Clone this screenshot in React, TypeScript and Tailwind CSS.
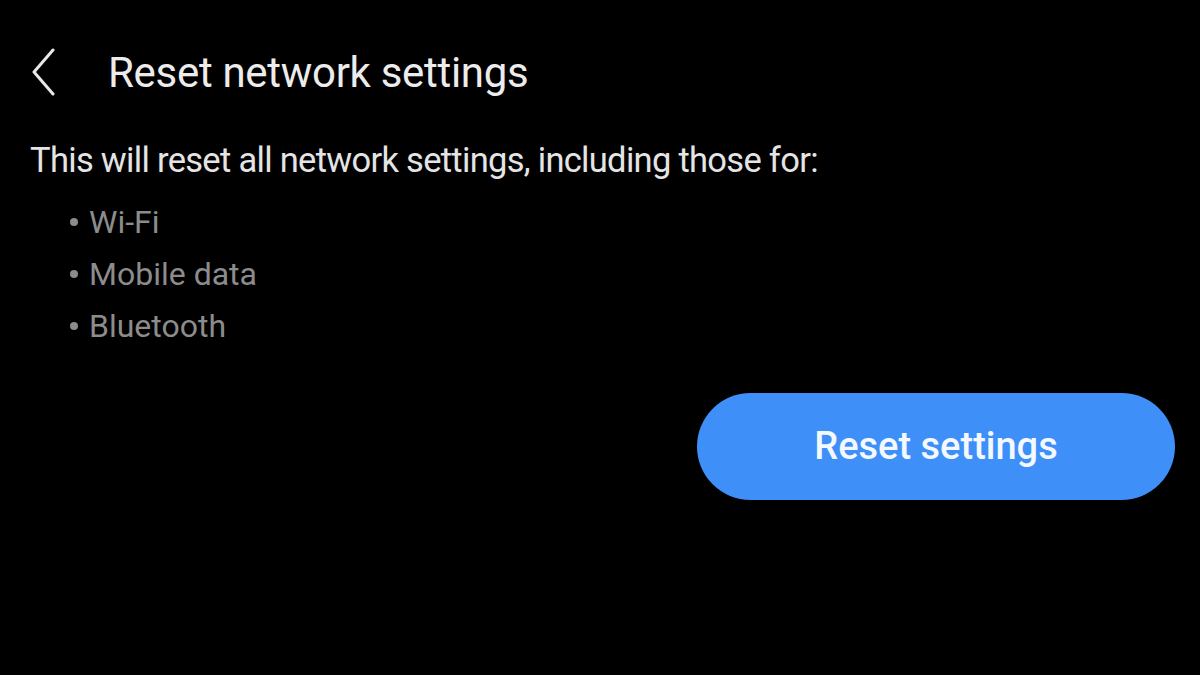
export default function App() {
  const items = ["Wi-Fi", "Mobile data", "Bluetooth"];

  return (
    <div
      className="w-[1200px] h-[675px] bg-black text-white overflow-hidden"
      style={{ fontFamily: "Roboto, 'Noto Sans', sans-serif" }}
    >
      <div className="flex items-center h-[80px] mt-[32px] pl-[31px]">
        <button className="w-[26px] h-[48px] flex items-center">
          <svg width="26" height="48" viewBox="0 0 26 48" fill="none">
            <path
              d="M22 2 L3 24 L22 46"
              stroke="#e8e8e8"
              strokeWidth="3"
              strokeLinecap="round"
              strokeLinejoin="round"
            />
          </svg>
        </button>
        <h1 className="ml-[51px] text-[42px] text-[#ececec] tracking-[-0.3px]">
          Reset network settings
        </h1>
      </div>

      <div className="pl-[30px] mt-[28px]">
        <p className="text-[34.5px] text-[#e4e4e4] tracking-[-0.7px] leading-[40px]">
          This will reset all network settings, including those for:
        </p>
        <ul className="mt-[16px] pl-[40px] text-[#8c8c8c] text-[32px]">
          {items.map((item) => (
            <li key={item} className="h-[52px] flex items-center gap-[11px]">
              <span className="w-[8px] h-[8px] rounded-full bg-[#8c8c8c]" />
              <span>{item}</span>
            </li>
          ))}
        </ul>
      </div>

      <div className="flex justify-end pr-[25px] mt-[41px]">
        <button className="w-[478px] h-[107px] rounded-full bg-[#3f8ff8] text-[#f4f8ff] text-[38px] font-medium">
          Reset settings
        </button>
      </div>
    </div>
  );
}
